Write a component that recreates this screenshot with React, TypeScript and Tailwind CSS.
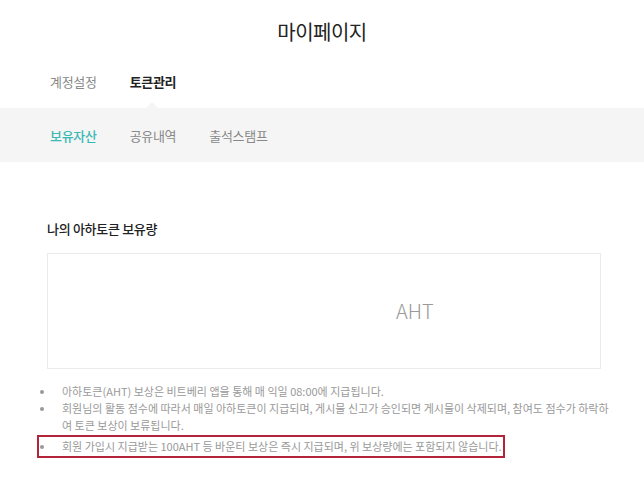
const font = "font-['Noto_Sans_CJK_KR','Noto_Sans',sans-serif]";

function Dot() {
  return (
    <span className="flex w-[23px] shrink-0 pl-[1px] pt-[7px]">
      <span className="h-[4px] w-[4px] rounded-full bg-[#999]" />
    </span>
  );
}

export default function App() {
  return (
    <div className={`${font} min-h-[483px] w-full bg-white text-[#222]`}>
      <header className="flex h-[64px] items-end justify-center pb-[18px]">
        <h1 className="text-[20px] leading-[28px] font-normal tracking-[-0.5px] text-[#222]">마이페이지</h1>
      </header>

      <nav className="flex h-[44px] items-start gap-[33px] pl-[50px] pt-[8px] text-[13px] leading-[20px] tracking-[-0.3px]">
        <span className="text-[#888]">계정설정</span>
        <span className="font-bold text-[#222]">토큰관리</span>
      </nav>

      <div className="relative flex h-[54px] items-center gap-[33px] bg-[#f5f5f5] pl-[50px] pt-[2px] text-[13px] tracking-[-0.3px]">
        <div className="absolute left-[146px] top-[-6px] h-0 w-0 border-x-[6px] border-b-[6px] border-x-transparent border-b-[#f5f5f5]" />
        <span className="font-medium text-[#3bb9b4]">보유자산</span>
        <span className="text-[#888]">공유내역</span>
        <span className="text-[#888]">출석스탬프</span>
      </div>

      <section className="pl-[47px] pr-[43px] pt-[57px]">
        <h2 className="text-[13px] leading-[20px] font-medium tracking-[-0.3px] text-[#222]">나의 아하토큰 보유량</h2>
        <div className="mt-[14px] flex h-[116px] items-center border border-[#ebebeb]">
          <span className="ml-[348px] text-[20px] font-light text-[#999]">AHT</span>
        </div>
      </section>

      <ul className="mt-[14px] pl-[37px] pr-[32px] text-[11px] leading-[17px] text-[#999]">
        <li className="flex px-[2px]">
          <Dot />
          <span>아하토큰(AHT) 보상은 비트베리 앱을 통해 매 익일 08:00에 지급됩니다.</span>
        </li>
        <li className="flex px-[2px]">
          <Dot />
          <span>회원님의 활동 점수에 따라서 매일 아하토큰이 지급되며, 게시물 신고가 승인되면 게시물이 삭제되며, 참여도 점수가 하락하여 토큰 보상이 보류됩니다.</span>
        </li>
        <li className="mt-[1px] flex w-fit border-2 border-[#b3243a] py-[1px] pr-[1px] whitespace-nowrap">
          <Dot />
          <span>회원 가입시 지급받는 100AHT 등 바운티 보상은 즉시 지급되며, 위 보상량에는 포함되지 않습니다.</span>
        </li>
      </ul>
    </div>
  );
}
